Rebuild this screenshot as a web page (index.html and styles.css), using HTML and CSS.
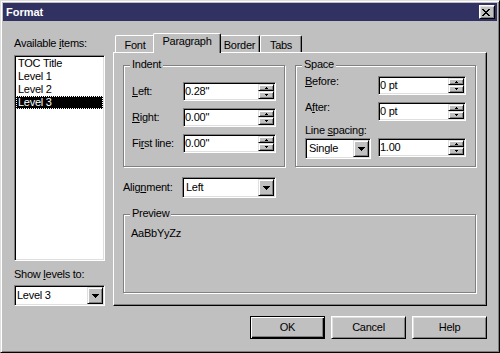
FILE: index.html
```html
<!DOCTYPE html>
<html lang="en">
<head>
<meta charset="utf-8">
<title>Format</title>
<link rel="stylesheet" href="styles.css">
</head>
<body>
<div class="window">
  <div class="titlebar">
    <span class="title">Format</span>
    <div class="close"><svg width="8" height="7" viewBox="0 0 8 7" shape-rendering="crispEdges"><path d="M0 0h2v1H0zM6 0h2v1H6zM1 1h2v1H1zM5 1h2v1H5zM2 2h4v1H2zM3 3h2v1H3zM2 4h4v1H2zM1 5h2v1H1zM5 5h2v1H5zM0 6h2v1H0zM6 6h2v1H6z" fill="#000"/></svg></div>
  </div>
  <div class="main">
    <div class="left">
      <div class="lbl">Available <u>i</u>tems:</div>
      <div class="sunken listbox">
        <div class="item">TOC Title</div>
        <div class="item">Level 1</div>
        <div class="item">Level 2</div>
        <div class="item selected">Level 3</div>
      </div>
      <div class="lbl show-lbl">Show <u>l</u>evels to:</div>
      <div class="sunken combo levels-combo">
        <span class="value">Level 3</span>
        <span class="raised dropbtn"><svg width="7" height="4" viewBox="0 0 7 4" shape-rendering="crispEdges"><path d="M0 0h7v1H0zM1 1h5v1H1zM2 2h3v1H2zM3 3h1v1H3z" fill="#000"/></svg></span>
      </div>
    </div>
    <div class="right">
      <div class="tabs">
        <div class="tab tab-font">Font</div>
        <div class="tab tab-para active">Paragraph</div>
        <div class="tab tab-border">Border</div>
        <div class="tab tab-tabs">Tabs</div>
      </div>
      <div class="panel">
        <div class="groups">
          <div class="group indent">
            <div class="gtitle">Indent</div>
            <div class="irow first">
              <span class="ilabel"><u>L</u>eft:</span>
              <div class="sunken field ifield">
                <span class="fval">0.28"</span>
                <span class="spin"><span class="raised up"><svg width="3" height="2" viewBox="0 0 3 2" shape-rendering="crispEdges"><path d="M1 0h1v1H1zM0 1h3v1H0z" fill="#000"/></svg></span><span class="raised down"><svg width="3" height="2" viewBox="0 0 3 2" shape-rendering="crispEdges"><path d="M0 0h3v1H0zM1 1h1v1H1z" fill="#000"/></svg></span></span>
              </div>
            </div>
            <div class="irow">
              <span class="ilabel"><u>R</u>ight:</span>
              <div class="sunken field ifield">
                <span class="fval">0.00"</span>
                <span class="spin"><span class="raised up"><svg width="3" height="2" viewBox="0 0 3 2" shape-rendering="crispEdges"><path d="M1 0h1v1H1zM0 1h3v1H0z" fill="#000"/></svg></span><span class="raised down"><svg width="3" height="2" viewBox="0 0 3 2" shape-rendering="crispEdges"><path d="M0 0h3v1H0zM1 1h1v1H1z" fill="#000"/></svg></span></span>
              </div>
            </div>
            <div class="irow">
              <span class="ilabel">Fi<u>r</u>st line:</span>
              <div class="sunken field ifield">
                <span class="fval">0.00"</span>
                <span class="spin"><span class="raised up"><svg width="3" height="2" viewBox="0 0 3 2" shape-rendering="crispEdges"><path d="M1 0h1v1H1zM0 1h3v1H0z" fill="#000"/></svg></span><span class="raised down"><svg width="3" height="2" viewBox="0 0 3 2" shape-rendering="crispEdges"><path d="M0 0h3v1H0zM1 1h1v1H1z" fill="#000"/></svg></span></span>
              </div>
            </div>
          </div>
          <div class="group space">
            <div class="gtitle">Space</div>
            <div class="srow first">
              <span class="slabel"><u>B</u>efore:</span>
              <div class="sunken field sfield">
                <span class="fval">0 pt</span>
                <span class="spin"><span class="raised up"><svg width="3" height="2" viewBox="0 0 3 2" shape-rendering="crispEdges"><path d="M1 0h1v1H1zM0 1h3v1H0z" fill="#000"/></svg></span><span class="raised down"><svg width="3" height="2" viewBox="0 0 3 2" shape-rendering="crispEdges"><path d="M0 0h3v1H0zM1 1h1v1H1z" fill="#000"/></svg></span></span>
              </div>
            </div>
            <div class="srow">
              <span class="slabel">A<u>f</u>ter:</span>
              <div class="sunken field sfield">
                <span class="fval">0 pt</span>
                <span class="spin"><span class="raised up"><svg width="3" height="2" viewBox="0 0 3 2" shape-rendering="crispEdges"><path d="M1 0h1v1H1zM0 1h3v1H0z" fill="#000"/></svg></span><span class="raised down"><svg width="3" height="2" viewBox="0 0 3 2" shape-rendering="crispEdges"><path d="M0 0h3v1H0zM1 1h1v1H1z" fill="#000"/></svg></span></span>
              </div>
            </div>
            <div class="ls-label">Line <u>s</u>pacing:</div>
            <div class="ls-row">
              <div class="sunken combo single-combo">
                <span class="value">Single</span>
                <span class="raised dropbtn"><svg width="7" height="4" viewBox="0 0 7 4" shape-rendering="crispEdges"><path d="M0 0h7v1H0zM1 1h5v1H1zM2 2h3v1H2zM3 3h1v1H3z" fill="#000"/></svg></span>
              </div>
              <div class="sunken field sfield">
                <span class="fval">1.00</span>
                <span class="spin"><span class="raised up"><svg width="3" height="2" viewBox="0 0 3 2" shape-rendering="crispEdges"><path d="M1 0h1v1H1zM0 1h3v1H0z" fill="#000"/></svg></span><span class="raised down"><svg width="3" height="2" viewBox="0 0 3 2" shape-rendering="crispEdges"><path d="M0 0h3v1H0zM1 1h1v1H1z" fill="#000"/></svg></span></span>
              </div>
            </div>
          </div>
        </div>
        <div class="align-row">
          <span class="alabel">Alig<u>n</u>ment:</span>
          <div class="sunken combo align-combo">
            <span class="value">Left</span>
            <span class="raised dropbtn"><svg width="7" height="4" viewBox="0 0 7 4" shape-rendering="crispEdges"><path d="M0 0h7v1H0zM1 1h5v1H1zM2 2h3v1H2zM3 3h1v1H3z" fill="#000"/></svg></span>
          </div>
        </div>
        <div class="group preview">
          <div class="gtitle">Preview</div>
          <div class="sample">AaBbYyZz</div>
        </div>
      </div>
    </div>
  </div>
  <div class="buttons">
    <div class="btn default">OK</div>
    <div class="btn">Cancel</div>
    <div class="btn">Help</div>
  </div>
</div>
</body>
</html>
```
FILE: styles.css
```css
* { box-sizing: border-box; }
html, body { margin: 0; padding: 0; }
body {
  font: 11px/13px "Liberation Sans", Arial, sans-serif;
  letter-spacing: -0.25px;
  color: #000;
  background: #c0c0c0;
}
u { text-decoration-thickness: 1px; text-underline-offset: 1px; }
svg { display: block; }

.window {
  width: 500px;
  height: 353px;
  background: #c0c0c0;
  border: 1px solid;
  border-color: #dfdfdf #000 #000 #dfdfdf;
  box-shadow: inset 1px 1px #fff, inset -1px -1px #808080;
  padding: 2px;
  display: flex;
  flex-direction: column;
}

.titlebar {
  flex: none;
  height: 18px;
  background: #323262;
  display: flex;
  align-items: center;
  justify-content: space-between;
  padding: 0 2px 0 3px;
}
.title { color: #fff; font-weight: bold; letter-spacing: 0; }
.close {
  width: 16px;
  height: 14px;
  display: flex;
  align-items: center;
  justify-content: center;
  padding: 1px 2px 0 0;
  background: #c0c0c0;
  border: 1px solid;
  border-color: #fff #000 #000 #fff;
  box-shadow: inset 1px 1px #dfdfdf, inset -1px -1px #808080;
}

.raised {
  background: #c0c0c0;
  border: 1px solid;
  border-color: #dfdfdf #000 #000 #dfdfdf;
  box-shadow: inset 1px 1px #fff, inset -1px -1px #808080;
}
.sunken {
  background: #fff;
  border: 1px solid;
  border-color: #808080 #fff #fff #808080;
  box-shadow: inset 1px 1px #000, inset -1px -1px #dfdfdf;
  padding: 1px;
}

.main { display: flex; flex: none; }

.left {
  width: 91px;
  margin-left: 11px;
  padding-top: 16px;
  display: flex;
  flex-direction: column;
}
.lbl { height: 13px; white-space: nowrap; }
.listbox { margin-top: 5px; height: 206px; }
.item { height: 13px; padding-left: 2px; white-space: nowrap; }
.item.selected {
  background: #000;
  color: #fff;
  outline: 1px dotted #fff;
  outline-offset: -1px;
}
.show-lbl { margin-top: 7px; }
.levels-combo { margin-top: 4px; }

.combo { display: flex; height: 21px; }
.combo .value { flex: 1; padding-left: 2px; line-height: 17px; white-space: nowrap; }
.dropbtn {
  width: 16px;
  display: flex;
  align-items: center;
  justify-content: center;
  padding-left: 1px;
}
.levels-combo .value { padding-left: 1px; }

.right { width: 374px; margin-left: 8px; padding-top: 12px; }
.tabs { display: flex; align-items: flex-end; height: 19px; padding-left: 2px; }
.tab {
  height: 17px;
  padding-top: 3px;
  text-align: center;
  background: #c0c0c0;
  border-top: 1px solid #fff;
  border-left: 1px solid #fff;
  border-right: 1px solid #000;
  box-shadow: inset -1px 0 #808080;
  border-radius: 2px 2px 0 0;
  white-space: nowrap;
}
.tab-font { width: 40px; }
.tab-para { width: 68px; }
.tab-border { width: 41px; }
.tab-tabs { width: 42px; }
.tab.active {
  height: 20px;
  padding-top: 1px;
  margin: 0 -2px -1px;
  position: relative;
  z-index: 1;
}

.panel {
  height: 254px;
  border: 1px solid;
  border-color: #fff #000 #000 #fff;
  box-shadow: inset -1px -1px #808080;
  padding: 12px 10px 0 9px;
}
.groups { display: flex; }
.group {
  border: 1px solid #808080;
  box-shadow: inset 1px 1px #fff, 1px 1px #fff;
}
.gtitle {
  display: table;
  margin: -8px 0 0 6px;
  padding: 0 2px;
  background: #c0c0c0;
}
.indent { width: 162px; height: 102px; }
.space { width: 181px; height: 102px; margin-left: 10px; }

.field { display: flex; height: 19px; }
.fval { flex: 1; line-height: 15px; white-space: nowrap; }
.spin { width: 16px; display: flex; flex-direction: column; }
.spin .up { height: 7px; }
.spin .down { flex: 1; }
.spin .up, .spin .down { display: flex; align-items: center; justify-content: center; }

.irow {
  display: flex;
  align-items: center;
  margin: 7px 0 0 8px;
}
.irow.first { margin-top: 11px; }
.ilabel { width: 51px; white-space: nowrap; }
.ifield { width: 93px; }

.srow { display: flex; align-items: flex-start; margin: 6px 0 0 9px; }
.srow.first { margin-top: 4px; }
.slabel { width: 73px; white-space: nowrap; }
.sfield { width: 88px; }
.srow .sfield { margin-top: 1px; }
.ls-label { margin: 3px 0 0 9px; white-space: nowrap; }
.ls-row { display: flex; gap: 7px; margin: 1px 0 0 9px; }
.single-combo { width: 66px; }

.align-row { display: flex; align-items: center; margin-top: 10px; }
.alabel { width: 59px; white-space: nowrap; }
.align-combo { width: 94px; }

.preview { margin-top: 16px; height: 79px; }
.sample { margin: 7px 0 0 7px; }

.buttons {
  display: flex;
  justify-content: flex-end;
  gap: 6px;
  margin-top: 10px;
  padding-right: 10px;
}
.btn {
  width: 75px;
  height: 23px;
  display: flex;
  align-items: center;
  justify-content: center;
  background: #c0c0c0;
  border: 1px solid;
  border-color: #fff #000 #000 #fff;
  box-shadow: inset 1px 1px #dfdfdf, inset -1px -1px #808080;
}
.btn.default {
  border-color: #000;
  box-shadow: inset 1px 1px #fff, inset -1px -1px #000, inset -2px -2px #808080;
}
```
